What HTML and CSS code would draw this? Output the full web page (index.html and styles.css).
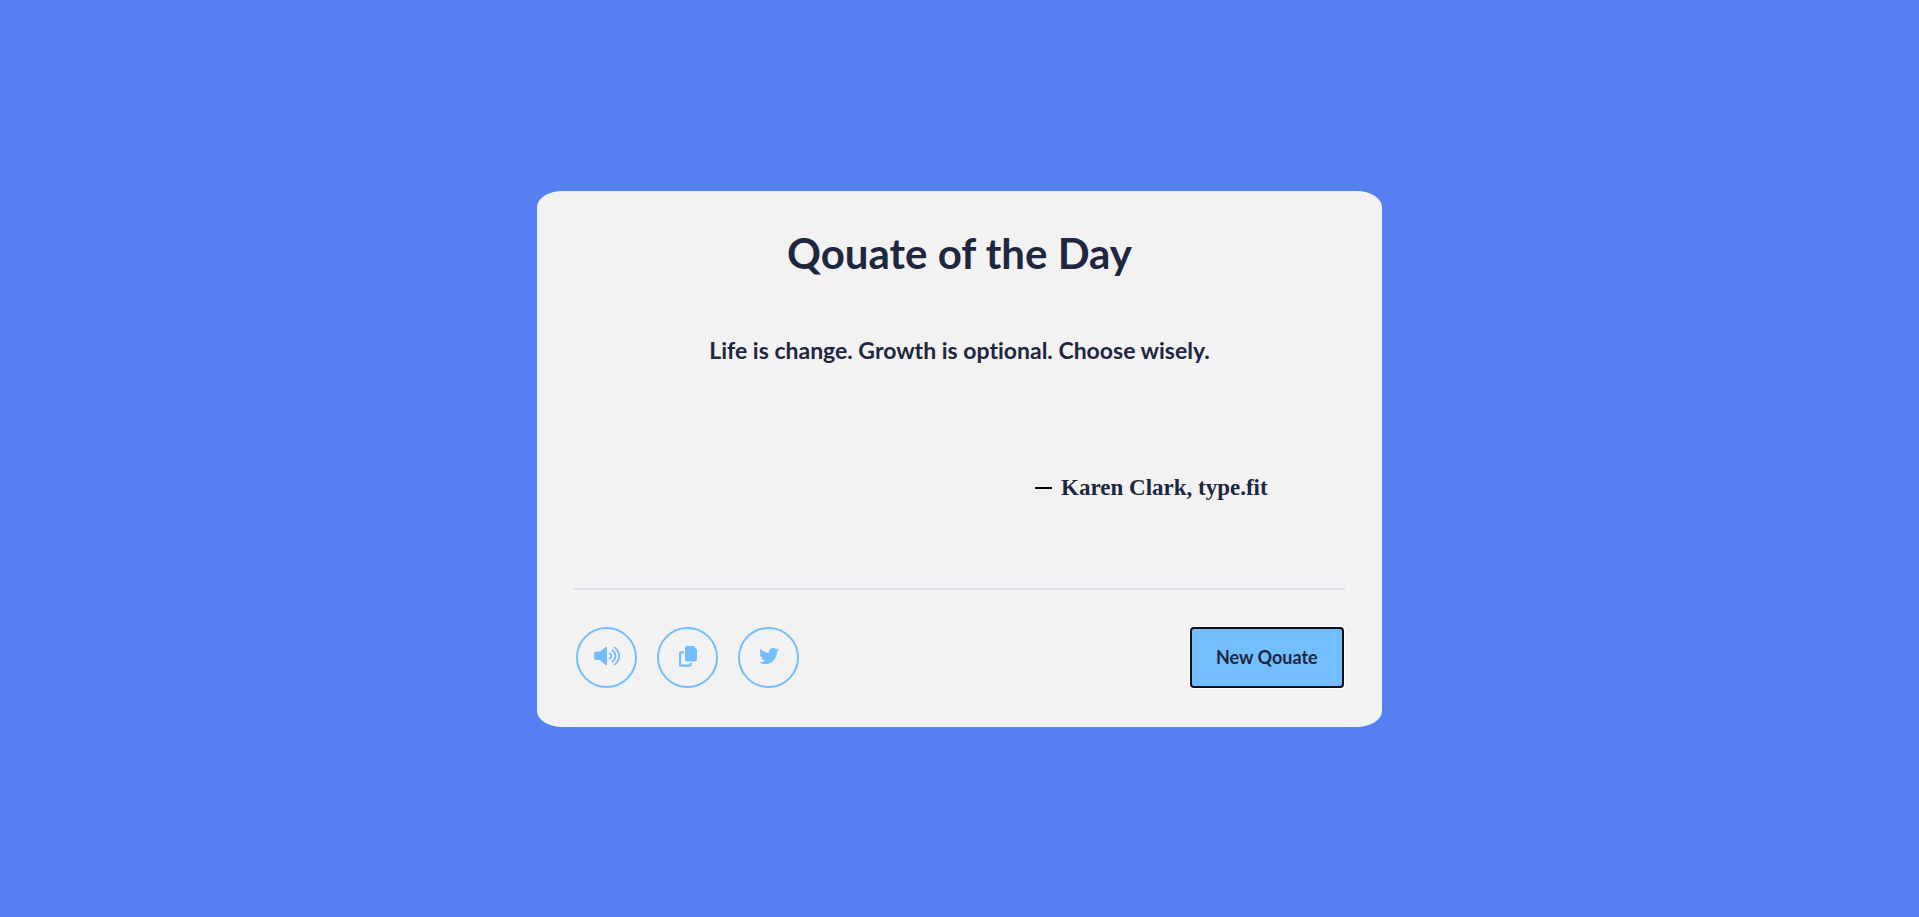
FILE: index.html
```html
<!DOCTYPE html>
<html lang="en">
<head>
<meta charset="utf-8">
<meta name="viewport" content="width=device-width, initial-scale=1">
<title>Qouate of the Day</title>
<link rel="stylesheet" href="styles.css">
</head>
<body>
<main class="card">
  <h1 class="title">Qouate of the Day</h1>
  <p class="quote">Life is change. Growth is optional. Choose wisely.</p>
  <div class="author"><span class="dash"></span><span>Karen Clark, type.fit</span></div>
  <footer class="footer">
    <div class="actions">
      <button class="action" type="button" aria-label="Listen">
        <svg width="26" height="20" viewBox="0 0 26 20" aria-hidden="true">
          <path fill="currentColor" d="M2 5.500h4L11.400 1.200Q13 .2 13 1.800v16.400Q13 19.800 11.400 18.800L6 14H2Q0 14 0 12V7.500Q0 5.500 2 5.500z"/>
          <path fill="none" stroke="currentColor" stroke-width="1.8" stroke-linecap="round" d="M15.700 7.400q1.800 1 1.800 2.600t-1.800 2.600M18.200 4.300q3.200 2 3.200 5.700t-3.200 5.700M20.600 1.400q4.500 3.200 4.500 8.600t-4.500 8.600"/>
        </svg>
      </button>
      <button class="action" type="button" aria-label="Copy">
        <svg width="18" height="21" viewBox="0 0 18 21" aria-hidden="true">
          <path fill="currentColor" d="M8 0h6.500L18 3.500v10q0 2-2 2H8q-2 0-2-2V2q0-2 2-2z"/>
          <path fill="none" stroke="currentColor" stroke-width="2.2" d="M5 6.300H2.300Q1.100 6.300 1.100 7.500v11q0 1.200 1.200 1.200H10.500q1.200 0 1.200-1.200V17"/>
        </svg>
      </button>
      <button class="action" type="button" aria-label="Tweet">
        <svg width="20" height="20" viewBox="0 0 512 512" aria-hidden="true">
          <path fill="currentColor" d="M459.37 151.716c.325 4.548.325 9.097.325 13.645 0 138.72-105.583 298.558-298.558 298.558-59.452 0-114.68-17.219-161.137-47.106 8.447.974 16.568 1.299 25.34 1.299 49.055 0 94.213-16.568 130.274-44.832-46.132-.975-84.792-31.188-98.112-72.772 6.498.974 12.995 1.624 19.818 1.624 9.421 0 18.843-1.3 27.614-3.573-48.081-9.747-84.143-51.98-84.143-102.985v-1.299c13.969 7.797 30.214 12.67 47.431 13.319-28.264-18.843-46.781-51.005-46.781-87.391 0-19.492 5.197-37.36 14.294-52.954 51.655 63.675 129.3 105.258 216.365 109.807-1.624-7.797-2.599-15.918-2.599-24.04 0-57.828 46.782-104.934 104.934-104.934 30.213 0 57.502 12.67 76.67 33.137 23.715-4.548 46.456-13.32 66.599-25.34-7.798 24.366-24.366 44.833-46.132 57.827 21.117-2.273 41.584-8.122 60.426-16.243-14.292 20.791-32.161 39.308-52.628 54.253z"/>
        </svg>
      </button>
    </div>
    <button class="new-quote" type="button">New Qouate</button>
  </footer>
</main>
</body>
</html>
```
FILE: styles.css
```css
* {
  box-sizing: border-box;
}

body {
  margin: 0;
  min-height: 100vh;
  display: flex;
  align-items: center;
  justify-content: center;
  background: #577ff4;
  color: #1e2640;
  font-family: "Gill Sans", "Gill Sans MT", Lato, sans-serif;
}

.card {
  width: 44%;
  min-width: 600px;
  padding: 37px 37px 39px;
  border-radius: 3%;
  background: #f2f2f2;
}

.title {
  margin: 0;
  font-size: 42px;
  line-height: 50px;
  font-weight: 700;
  text-align: center;
}

.quote {
  margin: 56px 0 0;
  font-size: 23px;
  line-height: 32px;
  font-weight: 700;
  font-variant-ligatures: none;
  text-align: center;
}

.author {
  display: flex;
  align-items: center;
  justify-content: flex-end;
  gap: 9px;
  margin: 108px 77px 0 0;
  font-family: "Times New Roman", "Liberation Serif", serif;
  font-size: 23px;
  line-height: 28px;
  font-weight: 700;
}

.dash {
  width: 17px;
  height: 2px;
  background: #000;
}

.footer {
  display: flex;
  align-items: center;
  justify-content: space-between;
  margin-top: 86px;
  padding: 37px 1px 0 2px;
  border-top: 2px solid #dadfeb;
}

.actions {
  display: flex;
  gap: 20px;
}

.action {
  display: flex;
  align-items: center;
  justify-content: center;
  width: 61px;
  height: 61px;
  padding: 0 0 2px;
  border: 2px solid #72befe;
  border-radius: 50%;
  background: transparent;
  color: #72befe;
  cursor: pointer;
}

.new-quote {
  height: 61px;
  padding: 0 24px;
  border: 2px solid #101010;
  border-radius: 4px;
  background: #72befe;
  box-shadow: 0 0 0 1px #fff;
  color: #1e2640;
  font: 700 18px/24px "Gill Sans", "Gill Sans MT", Lato, sans-serif;
  cursor: pointer;
}
```
